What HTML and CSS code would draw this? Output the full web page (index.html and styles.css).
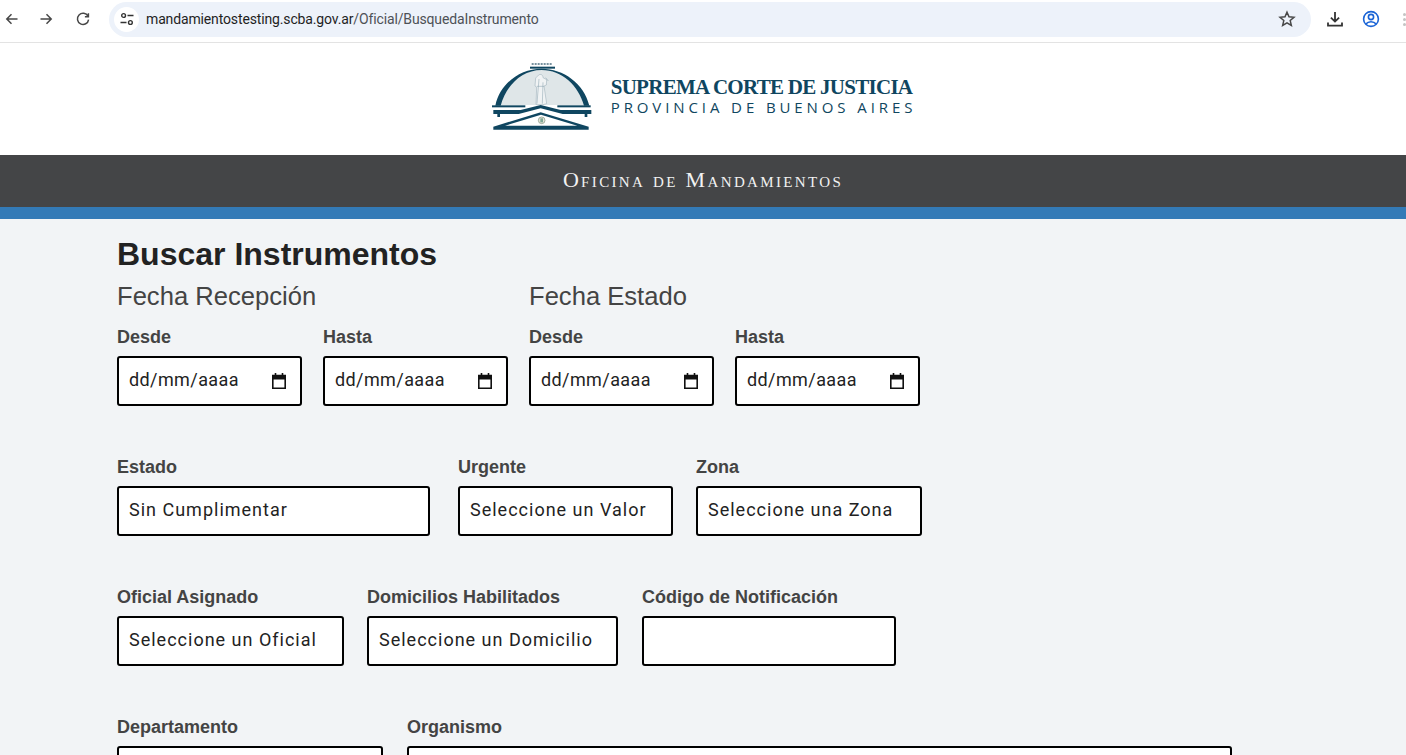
FILE: index.html
```html
<!DOCTYPE html>
<html lang="es">
<head>
<meta charset="utf-8">
<title>Buscar Instrumentos</title>
<link rel="stylesheet" href="styles.css">
</head>
<body>
<div class="toolbar">
  <svg class="nav-icon" viewBox="0 0 16 16"><path d="M13.5 8H3M7.5 3.3 2.800 8l4.700 4.700" /></svg>
  <svg class="nav-icon forward" viewBox="0 0 16 16"><path d="M2.500 8H13M8.500 3.300 13.200 8l-4.700 4.700" /></svg>
  <svg class="nav-icon reload" viewBox="0 0 16 16"><path d="M13 5.200A5.600 5.600 0 1 0 13.600 8.600M13.400 2.200v3.500H9.900" /></svg>
  <div class="omnibox">
    <span class="site-chip">
      <svg viewBox="0 0 16 16" class="tune"><circle cx="4.600" cy="4.500" r="1.900"/><path d="M8.500 4.500h6M1.500 11.500h6"/><circle cx="11.400" cy="11.500" r="1.900"/></svg>
    </span>
    <span class="url"><span class="host">mandamientostesting.scba.gov.ar</span>/Oficial/BusquedaInstrumento</span>
    <svg class="star" viewBox="0 0 18 18"><path d="M9 2.200l2 4.600 5 .45-3.800 3.300 1.150 4.900L9 12.900l-4.350 2.550 1.150-4.900L2 7.250l5-.45z"/></svg>
  </div>
  <svg class="download" viewBox="0 0 18 18"><path d="M9 2v9.400M4.900 7.600 9 11.600l4.100-4M2 12.600v3h14v-3"/></svg>
  <svg class="profile" viewBox="0 0 18 18"><circle cx="9" cy="9" r="7.400"/><circle cx="9" cy="7" r="2.600"/><path d="M3.900 14c1.300-1.600 3-2.300 5.100-2.300s3.800.7 5.100 2.300"/></svg>
  <span class="menu-dots"><i></i><i></i><i></i></span>
</div>

<header class="brand">
  <svg class="crest" viewBox="0 0 360 255">
    <path class="navy-dots" d="M155 27h63"/>
    <rect class="navy" x="150" y="35" width="75" height="6"/>
    <path class="dome" d="M62 150C78 90 128 44 185 44S295 90 312 150z"/>
    <path class="navy" d="M46 152C60 85 120 41 185 41S312 85 328 152H312C296 92 245 45 185 45S78 92 62 152z"/>
    <path class="statue" d="M176 60c7-4 13 0 13 8l11 6-1 16-7 3 8 53-11 3-21 0 2-52-5-4 2-24z"/>
    <path class="statue-line" d="M177 72 173 120 171 146M189 82 187 146M170 94h22M197 68l8 10"/>
    <rect class="navy" x="36" y="151" width="100" height="6"/>
    <rect class="navy" x="232" y="151" width="100" height="6"/>
    <path class="navy" d="M40 165H122L182 150 242 165H334V177H322V186H314V177H248L182 160 116 177H60V186H52V177H40z"/>
    <path class="navy" d="M182 172 326 215V224H40V215z"/>
    <path class="white" d="M183 179 292 212H75z"/>
    <circle class="seal" cx="185" cy="196" r="10"/>
    <rect class="seal-core" x="181" y="190" width="8" height="12"/>
  </svg>
  <div class="brand-text">
    <div class="brand-title">SUPREMA CORTE DE JUSTICIA</div>
    <div class="brand-sub">PROVINCIA DE BUENOS AIRES</div>
  </div>
</header>

<div class="banner"><span class="banner-text">Oficina de Mandamientos</span></div>

<main class="content">
  <h1>Buscar Instrumentos</h1>
  <div class="row dates">
    <section class="date-group">
      <h2>Fecha Recepción</h2>
      <div class="date-fields">
        <div class="field"><label>Desde</label><div class="box date"><span>dd/mm/aaaa</span><svg viewBox="0 0 18 18"><path class="cal-band" d="M2 3h14v4.500H2z"/><path d="M2.800 3.500h12.400v12.700H2.800z"/><path d="M5.500 1v2.500M12.500 1v2.500"/></svg></div></div>
        <div class="field"><label>Hasta</label><div class="box date"><span>dd/mm/aaaa</span><svg viewBox="0 0 18 18"><path class="cal-band" d="M2 3h14v4.500H2z"/><path d="M2.800 3.500h12.400v12.700H2.800z"/><path d="M5.500 1v2.500M12.500 1v2.500"/></svg></div></div>
      </div>
    </section>
    <section class="date-group">
      <h2>Fecha Estado</h2>
      <div class="date-fields">
        <div class="field"><label>Desde</label><div class="box date"><span>dd/mm/aaaa</span><svg viewBox="0 0 18 18"><path class="cal-band" d="M2 3h14v4.500H2z"/><path d="M2.800 3.500h12.400v12.700H2.800z"/><path d="M5.500 1v2.500M12.500 1v2.500"/></svg></div></div>
        <div class="field"><label>Hasta</label><div class="box date"><span>dd/mm/aaaa</span><svg viewBox="0 0 18 18"><path class="cal-band" d="M2 3h14v4.500H2z"/><path d="M2.800 3.500h12.400v12.700H2.800z"/><path d="M5.500 1v2.500M12.500 1v2.500"/></svg></div></div>
      </div>
    </section>
  </div>

  <div class="row form-row r2">
    <div class="field w313"><label>Estado</label><div class="box">Sin Cumplimentar</div></div>
    <div class="field w215"><label>Urgente</label><div class="box">Seleccione un Valor</div></div>
    <div class="field w226"><label>Zona</label><div class="box">Seleccione una Zona</div></div>
  </div>
  <div class="row form-row r3">
    <div class="field w227"><label>Oficial Asignado</label><div class="box">Seleccione un Oficial</div></div>
    <div class="field w251"><label>Domicilios Habilitados</label><div class="box">Seleccione un Domicilio</div></div>
    <div class="field w254"><label>Código de Notificación</label><div class="box"></div></div>
  </div>
  <div class="row form-row r4">
    <div class="field w266"><label>Departamento</label><div class="box"></div></div>
    <div class="field w825"><label>Organismo</label><div class="box"></div></div>
  </div>
</main>
</body>
</html>
```
FILE: styles.css
```css
* { box-sizing: border-box; }
html, body { margin: 0; height: 755px; overflow: hidden; }
body { background: #f2f4f6; font-family: "Liberation Sans", Arial, sans-serif; color: #222; }

.toolbar { height: 43px; background: #fff; border-bottom: 1px solid #e3e3e3; display: flex; align-items: center; padding: 0 0 4px 4px; overflow: hidden; }
.nav-icon { width: 16px; height: 16px; fill: none; stroke: #474747; stroke-width: 1.5; flex: none; }
.forward { margin-left: 18px; }
.reload { margin-left: 21px; }
.omnibox { margin-left: 18px; width: 1202px; height: 35px; border-radius: 18px; background: #edf2fa; display: flex; align-items: center; padding: 0 15px 0 5px; flex: none; }
.site-chip { width: 25px; height: 25px; border-radius: 50%; background: #fff; display: flex; align-items: center; justify-content: center; flex: none; }
.tune { width: 16px; height: 16px; fill: none; stroke: #333; stroke-width: 1.4; }
.url { font-family: "Roboto", sans-serif; font-size: 14px; color: #4d5156; margin-left: 7px; flex: 1; letter-spacing: -.14px; }
.host { color: #1f1f1f; }
.star { width: 18px; height: 18px; fill: none; stroke: #474747; stroke-width: 1.5; flex: none; }
.download { width: 18px; height: 18px; margin-left: 15px; fill: none; stroke: #333; stroke-width: 1.8; flex: none; }
.profile { width: 18px; height: 18px; margin-left: 18px; fill: none; stroke: #1a64d6; stroke-width: 1.6; flex: none; }
.menu-dots { margin-left: 23px; display: flex; flex-direction: column; gap: 2px; flex: none; }
.menu-dots i { width: 3px; height: 3px; border-radius: 50%; background: #c4c4c4; display: block; }

.brand { height: 112px; background: #fff; display: flex; align-items: flex-start; justify-content: center; padding: 12px 10px 0 0; gap: 11px; }
.crest { width: 120px; height: 85px; flex: none; }
.navy { fill: #0f4660; }
.navy-dots { fill: none; stroke: #4d6f80; stroke-width: 5; stroke-dasharray: 6 3; }
.white { fill: #fff; }
.dome { fill: #dfe6e8; }
.statue { fill: #f0f3f4; stroke: #7d97a4; stroke-width: 1.2; }
.statue-line { fill: none; stroke: #8aa2ae; stroke-width: 1.6; }
.seal { fill: #e6e6d8; stroke: #7d8f80; stroke-width: 2; }
.seal-core { fill: #7fa898; }
.brand-text { padding-top: 20px; color: #0f4660; }
.brand-title { font-family: "Liberation Serif", serif; font-weight: 700; font-size: 21px; line-height: 24px; letter-spacing: -.72px; white-space: nowrap; }
.brand-sub { font-family: "Open Sans", sans-serif; font-size: 15px; line-height: 17px; letter-spacing: 3.9px; white-space: nowrap; }

.banner { height: 64px; background: #444547; border-bottom: 12px solid #337ab7; display: flex; align-items: center; justify-content: center; padding-bottom: 2px; }
.banner-text { font-family: "Liberation Serif", serif; font-variant: small-caps; font-size: 22px; letter-spacing: 2.35px; color: #f2f2f2; }

.content { height: 536px; overflow: hidden; padding: 17px 0 0 117px; }
h1 { margin: 0; font-size: 32px; line-height: 36px; font-weight: 700; color: #222; }
h2 { margin: 0; font-size: 25.6px; line-height: 30px; font-weight: 400; color: #444; }
.row { display: flex; }
.dates { gap: 21px; margin-top: 9px; }
.date-group { width: 391px; }
.date-fields { display: flex; gap: 21px; margin-top: 16px; }
.field { display: flex; flex-direction: column; flex: none; }
label { font-size: 18px; line-height: 20px; font-weight: 700; color: #444; margin-bottom: 9px; white-space: nowrap; }
.box { height: 50px; background: #fff; border: 2px solid #000; border-radius: 3px; padding: 0 10px 4px; display: flex; align-items: center; font-family: "Roboto", sans-serif; font-size: 18px; letter-spacing: 1px; color: #222; white-space: nowrap; }
.date { width: 185px; justify-content: space-between; padding-right: 12px; letter-spacing: .4px; }
.date svg { width: 18px; height: 18px; margin-top: 4px; fill: none; stroke: #111; stroke-width: 1.6; flex: none; }
.date svg .cal-band { fill: #111; stroke: none; }
.form-row { margin-top: 51px; }
.r2 { gap: 28px; }
.r3 { gap: 23px; }
.r4 { gap: 24px; }
.r2 .field:last-child { margin-left: -5px; }
.r3 .field:last-child { margin-left: 1px; }
.w313 { width: 313px; }
.w215 { width: 215px; }
.w226 { width: 226px; }
.w227 { width: 227px; }
.w251 { width: 251px; }
.w254 { width: 254px; }
.w266 { width: 266px; }
.w825 { width: 825px; }
```
